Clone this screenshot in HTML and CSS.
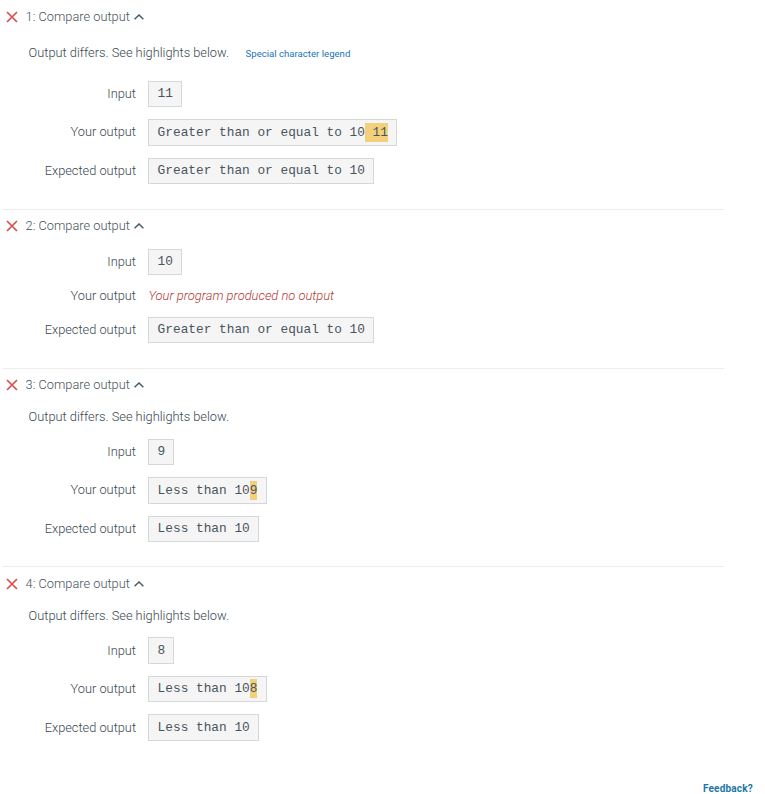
FILE: index.html
```html
<!DOCTYPE html>
<html lang="en">
<head>
  <meta charset="UTF-8" />
  <meta name="viewport" content="width=device-width, initial-scale=1.0"/>
  <title>Compare output</title>
  <link rel="stylesheet" href="styles.css">
</head>
<body>
  <div class="results">
    <section class="test">
      <div class="test-header">
        <svg class="cross" viewBox="0 0 12 12"><path d="M1 1L11 11M11 1L1 11"/></svg>
        <span class="title">1: Compare output</span>
        <svg class="chevron" viewBox="0 0 10 6"><path d="M0.6 5.2L5 1L9.4 5.2"/></svg>
      </div>
      <div class="message with-legend"><span class="differs">Output differs. See highlights below.</span> <a class="legend">Special character legend</a></div>
      <div class="rows">
        <div class="row"><div class="label">Input</div><pre class="box">11</pre></div>
        <div class="row"><div class="label">Your output</div><pre class="box">Greater than or equal to 10<span class="highlight"> 11</span></pre></div>
        <div class="row"><div class="label">Expected output</div><pre class="box">Greater than or equal to 10</pre></div>
      </div>
    </section>

    <section class="test">
      <div class="test-header">
        <svg class="cross" viewBox="0 0 12 12"><path d="M1 1L11 11M11 1L1 11"/></svg>
        <span class="title">2: Compare output</span>
        <svg class="chevron" viewBox="0 0 10 6"><path d="M0.6 5.2L5 1L9.4 5.2"/></svg>
      </div>
      <div class="rows">
        <div class="row"><div class="label">Input</div><pre class="box">10</pre></div>
        <div class="row"><div class="label">Your output</div><div class="no-output">Your program produced no output</div></div>
        <div class="row"><div class="label">Expected output</div><pre class="box">Greater than or equal to 10</pre></div>
      </div>
    </section>

    <section class="test">
      <div class="test-header">
        <svg class="cross" viewBox="0 0 12 12"><path d="M1 1L11 11M11 1L1 11"/></svg>
        <span class="title">3: Compare output</span>
        <svg class="chevron" viewBox="0 0 10 6"><path d="M0.6 5.2L5 1L9.4 5.2"/></svg>
      </div>
      <div class="message"><span class="differs">Output differs. See highlights below.</span></div>
      <div class="rows">
        <div class="row"><div class="label">Input</div><pre class="box">9</pre></div>
        <div class="row"><div class="label">Your output</div><pre class="box">Less than 10<span class="highlight">9</span></pre></div>
        <div class="row"><div class="label">Expected output</div><pre class="box">Less than 10</pre></div>
      </div>
    </section>

    <section class="test">
      <div class="test-header">
        <svg class="cross" viewBox="0 0 12 12"><path d="M1 1L11 11M11 1L1 11"/></svg>
        <span class="title">4: Compare output</span>
        <svg class="chevron" viewBox="0 0 10 6"><path d="M0.6 5.2L5 1L9.4 5.2"/></svg>
      </div>
      <div class="message"><span class="differs">Output differs. See highlights below.</span></div>
      <div class="rows">
        <div class="row"><div class="label">Input</div><pre class="box">8</pre></div>
        <div class="row"><div class="label">Your output</div><pre class="box">Less than 10<span class="highlight">8</span></pre></div>
        <div class="row"><div class="label">Expected output</div><pre class="box">Less than 10</pre></div>
      </div>
    </section>
  </div>

  <footer>
    <a class="feedback">Feedback?</a>
  </footer>
</body>
</html>
```
FILE: styles.css
```css
* {
  box-sizing: border-box;
}

body {
  font-family: Roboto, sans-serif;
  font-size: 12.8px;
  font-weight: 300;
  color: #37474f;
  background: #fff;
  margin: 0;
  height: 794px;
  display: flex;
  flex-direction: column;
  justify-content: space-between;
}

.results {
  width: 721px;
  margin-left: 3px;
}

.test {
  padding-bottom: 24.55px;
}

.test + .test {
  border-top: 1px solid #ececec;
}

.test-header {
  display: flex;
  align-items: center;
  height: 33px;
  padding-left: 3px;
  color: #45535b;
}

.title {
  margin-top: -0.6px;
}

.cross {
  width: 12px;
  height: 12px;
  margin-right: 7.6px;
  fill: none;
  stroke: #d8504d;
  stroke-width: 1.7;
}

.chevron {
  width: 10px;
  height: 6px;
  margin-left: 4.4px;
  fill: none;
  stroke: #4a5a64;
  stroke-width: 1.5;
}

.message {
  display: flex;
  align-items: center;
  height: 31px;
  padding: 0 0 1px 25.6px;
}

.message.with-legend {
  height: 39px;
  margin-bottom: 2.8px;
  padding-bottom: 0;
}

.legend {
  margin: 1.5px 0 0 16.6px;
  font-size: 9.6px;
  font-weight: 400;
  color: #1976b8;
}

.rows {
  display: flex;
  flex-direction: column;
  gap: 12px;
  padding-top: 6px;
}

.row {
  display: flex;
  align-items: center;
}

.label {
  width: 133px;
  margin: -1px 12px 0 0;
  text-align: right;
}

.box {
  margin: 0;
  padding: 5.5px 8.1px 4.5px 8.6px;
  border: 1px solid #d5d7d8;
  background: #f5f5f5;
  font: 12.8px/14.4px "Liberation Mono", monospace;
  color: #4a545c;
}

.highlight {
  padding: 2px 0;
  background: #f3d17c;
}

.no-output {
  margin-left: 0.5px;
  font-size: 12.9px;
  font-style: italic;
  line-height: 17.8px;
  color: #b03a36;
}

footer {
  padding-right: 12px;
  text-align: right;
}

.feedback {
  display: block;
  font-size: 10px;
  line-height: 11px;
  font-weight: 700;
  letter-spacing: 0.2px;
  color: #1976a8;
}
```
